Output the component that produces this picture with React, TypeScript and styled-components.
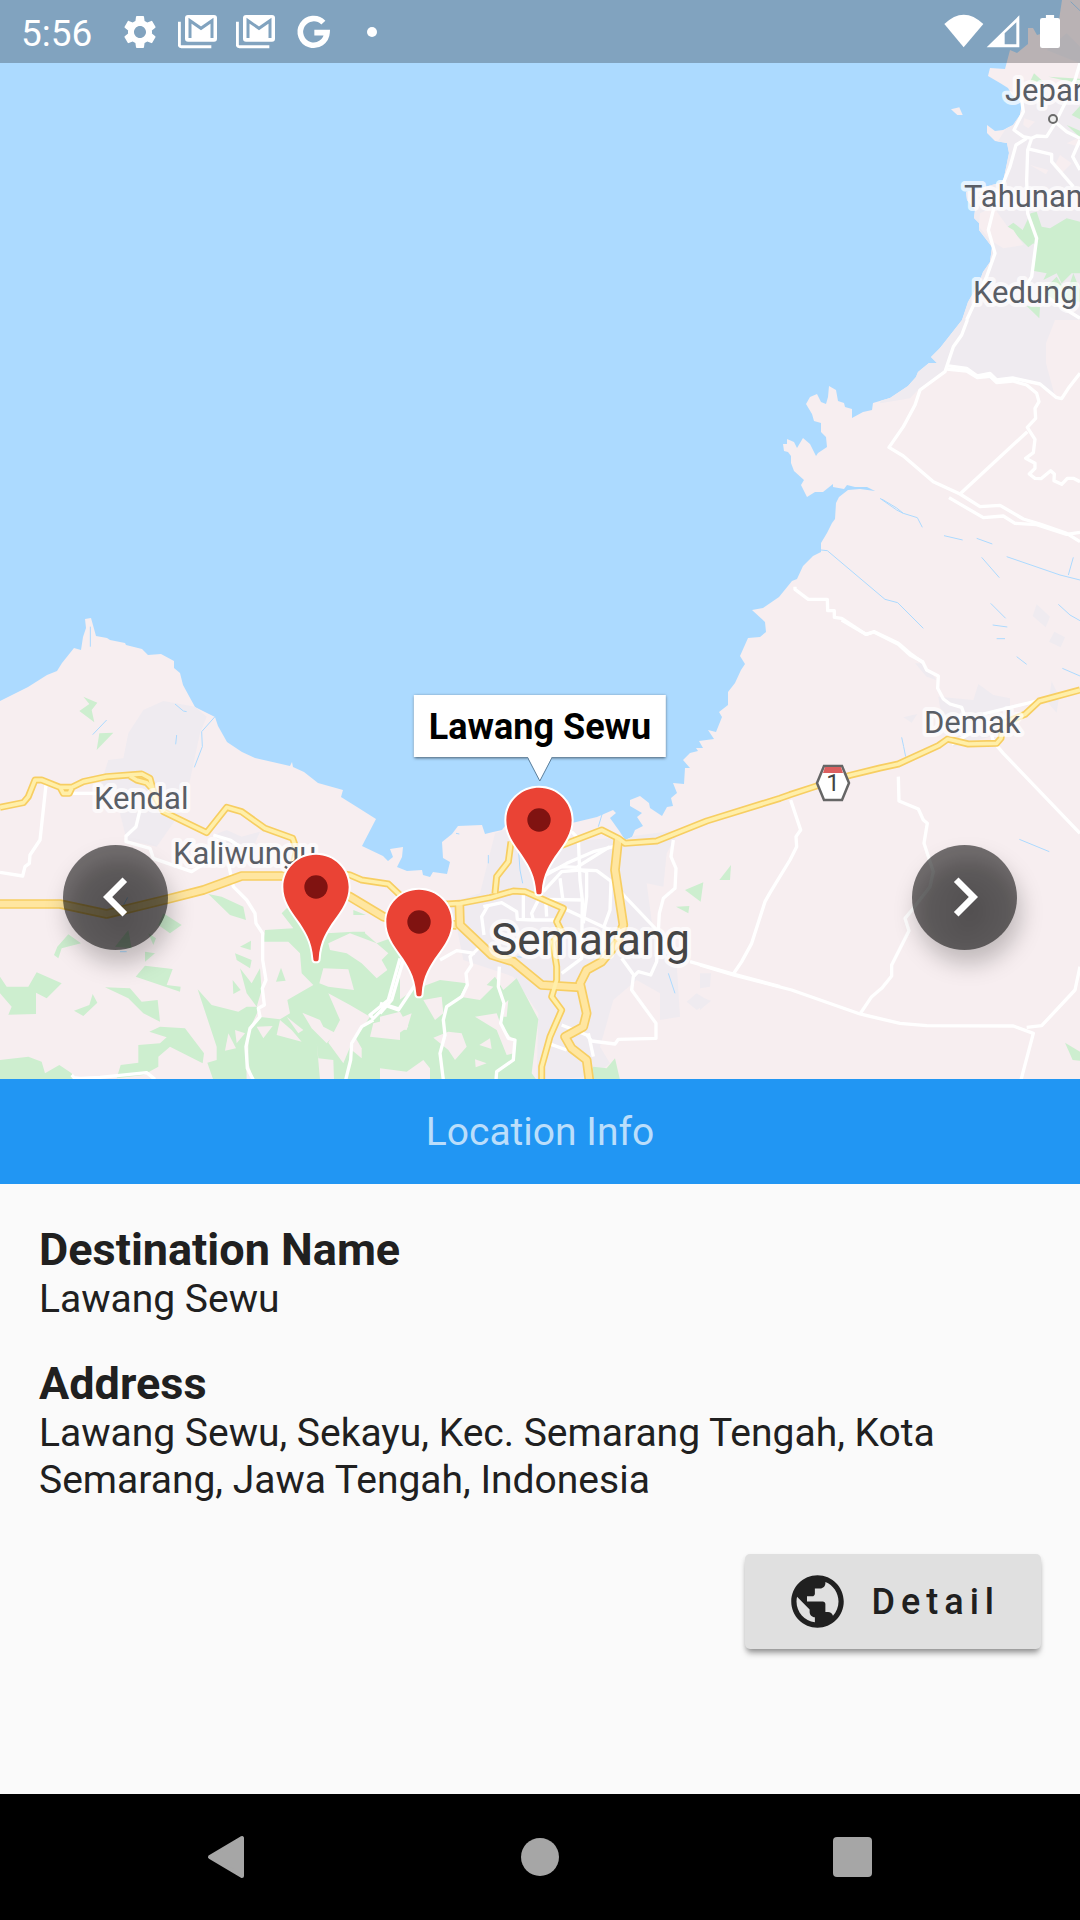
import React from "react";
import styled, { createGlobalStyle } from "styled-components";
import { MdChevronLeft, MdChevronRight, MdPublic, MdSettings } from "react-icons/md";

const GlobalStyle = createGlobalStyle`
  * { box-sizing: border-box; }
  body { margin: 0; background: #fafafa; font-family: Roboto, "Liberation Sans", sans-serif; }
  h1, h2, p, dl, dt, dd { margin: 0; }
  button { font: inherit; border: 0; padding: 0; cursor: pointer; }
`;

const Screen = styled.main`
  display: flex;
  flex-direction: column;
  min-height: 100vh;
  background: #fafafa;
  color: #202020;
`;

const MapArea = styled.section`
  position: relative;
  width: 100%;
  aspect-ratio: 1080 / 1079;
  overflow: hidden;
  background: #acdaff;
`;

const MapDrawing = styled.svg`
  display: block;
  width: 100%;
  height: 100%;
`;

const StatusBar = styled.header`
  position: absolute;
  inset: 0 0 auto 0;
  display: flex;
  align-items: center;
  justify-content: space-between;
  height: 63px;
  padding: 0 20px 0 21px;
  background: rgba(0, 0, 0, 0.25);
  color: #fff;
`;

const StatusGroup = styled.div<{ $gap: number }>`
  display: flex;
  align-items: center;
  gap: ${(p) => p.$gap}px;
  svg { display: block; }
`;

const Clock = styled.time`
  font-size: 37px;
  line-height: 44px;
  margin: 4px 10px 0 0;
`;

const Pin = styled.button<{ $x: number; $y: number }>`
  position: absolute;
  left: ${(p) => p.$x}%;
  top: ${(p) => p.$y}%;
  width: 70px;
  height: 115px;
  margin: -35px 0 0 -35px;
  background: none;
  svg { display: block; }
`;

const Callout = styled.div`
  position: absolute;
  left: 50%;
  top: 64.4%;
  transform: translateX(-50%);
  padding: 11px 15px 9px;
  background: #fff;
  color: #000;
  font-size: 36px;
  line-height: 42px;
  font-weight: 700;
  white-space: nowrap;
  box-shadow: 0 1px 3px rgba(0, 0, 0, 0.6);
`;

const CalloutTip = styled.svg`
  position: absolute;
  left: 50%;
  top: 100%;
  width: 24px;
  height: 25px;
  margin-left: -12px;
`;

const StepButton = styled.button<{ $side: "left" | "right" }>`
  position: absolute;
  ${(p) => p.$side}: 63px;
  top: 78.3%;
  display: grid;
  place-items: center;
  width: 105px;
  height: 105px;
  border-radius: 50%;
  background: rgba(0, 0, 0, 0.54);
  color: #fff;
  filter: drop-shadow(4px 14px 11px rgba(0, 0, 0, 0.4));
`;

const PanelHeader = styled.h1`
  padding: 30px 32px 28px;
  background: #2196f3;
  color: #bbdefb;
  font-size: 39px;
  line-height: 47px;
  font-weight: 400;
  text-align: center;
`;

const Panel = styled.section`
  flex: 1;
  display: flex;
  flex-direction: column;
  padding: 40px 39px;
`;

const Details = styled.dl`
  display: flex;
  flex-direction: column;
  gap: 35px;
`;

const Term = styled.dt`
  font-size: 45px;
  line-height: 52px;
  font-weight: 700;
`;

const Value = styled.dd`
  font-size: 39px;
  line-height: 47px;
`;

const DetailButton = styled.button`
  align-self: flex-end;
  display: flex;
  align-items: center;
  gap: 22px;
  height: 95px;
  margin-top: 50px;
  padding: 0 41px;
  border-radius: 5px;
  background: #e0e0e0;
  color: #202020;
  box-shadow: 0 6px 6px -2px rgba(0, 0, 0, 0.35), 0 2px 4px rgba(0, 0, 0, 0.12);
`;

const ButtonLabel = styled.span`
  font-size: 36px;
  line-height: 42px;
  font-weight: 500;
  letter-spacing: 6px;
`;

const NavBar = styled.nav`
  display: grid;
  grid-template-columns: repeat(3, 29%);
  justify-content: center;
  height: 126px;
  background: #000;
`;

const NavButton = styled.button`
  display: grid;
  place-items: center;
  background: none;
  color: #a6a6a6;
`;

const SEA = "#acdaff";
const LAND = "#f7eef0";
const URBAN = "#efebf0";
const GREEN = "#cdeecf";

const coast =
  "M0,701 28,687 47,675 57,671 62,663 74,648 81,650 83,637 86,628 85,619 91,618 96,636 107,638 110,640 125,643 126,645 142,649 148,655 161,654 174,661 174,668 180,673 183,685 195,707 215,717 218,726 227,742 242,752 255,758 290,766 292,762 293,767 304,772 318,783 343,790 341,797 357,807 376,819 362,846 383,856 388,861 393,857 390,849 403,847 402,857 397,867 407,871 422,870 423,875 430,877 433,872 447,874 450,862 443,858 442,842 452,834 458,826 482,825 485,834 493,832 502,830 505,826 572,823 597,817 613,810 616,813 610,818 620,832 625,840 632,837 635,830 643,826 637,817 642,813 630,806 630,800 640,796 649,803 650,808 662,816 667,807 673,806 671,798 677,793 673,783 684,784 685,768 690,768 683,760 690,753 698,751 696,748 703,748 699,741 714,739 708,730 716,732 722,717 719,712 728,705 728,692 735,683 741,670 745,664 740,656 748,638 760,637 766,632 765,622 752,610 763,608 779,597 792,581 797,579 803,566 813,556 821,552 821,543 827,533 832,523 835,519 836,503 839,497 848,490 860,489 875,491 867,487 855,487 847,485 844,489 833,487 833,484 823,492 815,492 807,497 801,485 804,480 794,471 791,463 791,456 788,452 784,451 783,444 787,444 787,439 794,442 797,448 803,438 810,444 816,456 818,453 827,447 826,437 821,432 821,423 814,421 812,414 806,404 810,397 817,394 821,402 826,404 828,397 829,386 836,390 838,401 844,403 845,407 852,409 852,418 863,412 872,410 873,403 890,398 908,386 916,377 918,372 929,363 937,363 931,357 940,348 962,320 968,302 975,290 980,280 983,272 990,262 992,247 979,230 979,223 974,218 975,210 967,200 966,192 1003,182 1007,163 1009,153 1007,143 995,141 987,133 987,125 995,131 1003,130 1013,125 1020,115 1022,103 1012,95 1008,88 1000,83 988,76 990,68 1005,69 1010,50 1017,53 1028,44 1028,28 1033,28 1037,35 1051,31 1059,20 1062,0 1080,0 1080,1080 0,1080Z";

interface Sheet {
  x: number;
  y: number;
  urban?: string[];
  parks?: string[];
  clearings?: string[];
  streams?: string[];
  streets?: string[];
  roads?: string[];
  highways?: string[];
}

// The map is split into sheets drawn at three times their final size.
const sheets: Sheet[] = [
  {
    x: 880, y: 0,
    urban: [
      "420,320 470,260 600,290 600,960 525,960 498,1030 498,1090 525,1190 465,1150 340,1143 270,1110 195,1110 120,1164 90,1195 0,1210 60,1020 240,600",
      "500,150 560,100 600,140 600,190",
    ],
    parks: [
      "383,680 400,668 428,690 452,640 470,635 485,680 510,685 560,655 600,665 600,820 575,820 545,850 530,820 490,840 500,820 458,812 470,740 460,730 445,742",
      "560,375 600,392 600,412", "575,345 600,318 600,358", "505,230 600,236 600,252", "450,245 462,220 490,245",
      "480,880 530,830 560,880 580,820 600,870 600,905 500,900", "440,918 480,920 478,955",
    ],
    clearings: [
      "300,640 340,620 383,680 400,690 430,735 370,745 330,720 297,680",
      "432,355 465,365 445,385 430,375", "540,465 575,490 545,520 525,495", "450,495 505,510 498,523", "560,430 598,412 598,440",
      "213,328 238,322 248,345 232,345",
    ],
    streets: [
      "600,190 585,240 555,310 525,370 500,410 470,408 455,415 430,410 402,390 430,335 425,300",
      "440,415 408,435 390,500 345,610 325,690 345,760 320,830 260,960",
      "455,415 443,450 440,540 443,640 470,715 455,830 430,870",
      "445,447 515,463 515,485 580,560", "530,370 560,395 600,415", "600,420 578,470 600,510", "500,890 560,930 600,955",
    ],
    streams: ["572,5 600,32"],
  },
  {
    x: 740, y: 320,
    urban: ["890,853 930,890 917,922 878,888", "943,935 975,952 962,982 927,965"],
    streets: [
      "682,0 665,45 640,80 615,155 540,210 525,255 490,320 447,382 490,408 580,485 660,522 720,560 780,556 850,597 900,612 980,640 1020,665",
      "620,137 680,145 712,168 750,160 770,180 818,174 900,192 948,232 965,236 985,205 1020,160",
      "620,147 680,153 712,173 750,169 770,188 818,183 860,195 890,220 897,245 885,265 887,295 862,322 885,358 880,398 857,415 885,430 885,445 868,462 885,475 903,476 932,452 943,462 942,482 965,493 982,475 1000,475 1020,485",
      "862,335 660,522",
      "627,533 730,593 790,588 825,610 890,614 980,643 1020,637",
      "165,800 165,808 205,838 262,838 263,872 283,872 283,892 305,895 378,943 403,935 475,970 510,1000 548,1027",
    ],
    streams: [
      "420,535 470,570 490,580 532,593 547,622", "425,537 470,564 490,580", "612,647 668,660", "710,655 757,672",
      "800,710 960,765 1020,780", "1000,712 985,765", "725,712 778,773", "752,850 797,895", "758,915 802,921",
      "770,956 795,956", "955,853 990,885 1020,902", "243,690 262,692 435,838 473,848 550,925",
    ],
  },
  {
    x: 0, y: 600,
    urban: [
      "385,400 430,330 490,303 585,320 620,350 600,400 570,540 540,640 470,740 380,720 360,640 400,600 300,560 325,480 370,475",
      "640,705 680,690 725,710 780,695 760,740 700,770",
    ],
    parks: [
      "250,290 292,308 275,330 283,367 238,333 268,312", "298,400 340,398 290,450",
      "0,1130 20,1160 85,1160 110,1117 185,1150 140,1195 108,1178 108,1242 25,1244 35,1220 0,1180",
      "205,1003 243,1030 185,1045 175,1075 162,1065 172,1040", "278,1182 292,1208 250,1248 222,1232 268,1215",
      "315,1162 390,1165 425,1205 473,1200 480,1265 430,1240 385,1195",
      "435,1097 518,1107 500,1155 542,1160 540,1175 407,1130", "490,940 545,975 510,1000 475,975",
      "435,1055 465,1060 435,1085", "345,1040 385,990 395,1045", "445,1000 468,1015 460,1035",
      "0,1380 85,1370 125,1385 135,1420 178,1395 215,1420 220,1440 0,1440",
      "448,1295 480,1280 555,1285 612,1360 608,1390 510,1340 475,1370 475,1400 430,1425 350,1435 362,1395 415,1388 415,1335 480,1330 500,1312",
      "625,882 665,890 730,920 738,960 690,945", "705,1060 755,1080 750,1105 710,1080", "720,1040 753,1022 752,1050",
      "720,1105 755,1150 780,1105 785,1170 770,1220 740,1180", "843,1103 857,1142 828,1145", "698,1140 722,1170 700,1182",
      "593,1168 635,1215 715,1235 740,1220 780,1220 750,1285 738,1340 740,1440 640,1440 622,1388 650,1380 650,1340",
      "860,925 900,910 905,960 980,1000 1060,995 1098,995 1098,945 1060,945 1060,930 1098,945 1098,1000 1200,1010 1200,1440 760,1440 745,1390 745,1300 775,1250 840,1258 870,1240 862,1200 940,1155 905,1120 900,1060 865,1025 790,1025 795,990 880,985 845,940",
    ],
    clearings: [
      "970,1105 1045,1108 1062,1170 985,1160 958,1150", "985,1030 1050,1000 1130,1030 1165,1060 1145,1080 1162,1110 1130,1135 1085,1090 1040,1060 990,1050",
      "1098,950 1200,960 1200,1005 1130,1030 1095,1000", "770,1280 818,1278 790,1315", "840,1260 875,1290 905,1325 830,1305",
      "860,1250 910,1290 895,1300", "907,1238 960,1260 970,1280 1008,1300 980,1330 935,1285", "985,1180 1050,1215 1110,1250 1090,1280 1055,1330 1030,1390 985,1328 1020,1260",
      "950,1325 955,1375 1000,1380 1002,1440 960,1440", "685,1300 708,1345 675,1352", "705,1290 735,1300 710,1330",
      "1065,1310 1085,1345 1085,1375 1055,1350", "1120,1270 1200,1250 1200,1320 1110,1310",
    ],
    streams: ["525,312 550,333 560,335", "645,350 605,395 607,440 583,502", "530,405 527,433", "278,404 320,360", "271,80 271,140", "383,892 368,920", "360,1055 380,1055"],
    streets: [
      "138,555 120,720 90,765 88,790 75,800 68,828 0,817", "215,580 290,580",
      "420,630 408,680 378,708 378,725 450,745 460,775 575,815 630,780", "640,705 690,720 720,740",
      "685,790 700,860 740,900 765,940 768,970 788,1000 788,1080 798,1140 787,1165 793,1215 775,1225 780,1250 750,1285 738,1340 742,1405 760,1440",
      "1200,1075 1165,1200 1110,1245 1120,1255 1160,1215 1200,1228", "1120,1260 1085,1280 1055,1330 1052,1380 1037,1440",
      "215,1425 222,1433 240,1435 300,1432 440,1418 465,1438",
    ],
    roads: [
      "390,528 410,540 440,548 460,570", "182,565 190,580 208,580 215,565",
      "0,622 70,608 85,590 105,540 125,540 180,562 215,562 250,545 320,530 425,522 450,535 465,590 490,635 620,698 680,622 725,635 795,685 878,715 890,750 880,790 960,810 1050,825 1085,840 1165,852 1210,895 1330,912 1345,912",
    ],
    highways: ["0,912 180,912 320,942 500,898 610,870 725,828 850,828 960,850 1050,890 1150,950 1200,965 1370,975"],
  },
  {
    x: 380, y: 680,
    urban: [
      "300,640 345,460 400,440 500,500 560,470 620,480 740,470 900,450 860,520 850,620 800,610 820,760 890,850 900,1010 840,1020 840,940 770,900 700,960 660,1100 690,1150 640,1190 470,1200 475,1000 400,890 250,840 230,740 205,670",
      "950,940 990,965 950,990 920,965",
    ],
    parks: [
      "0,780 15,775 45,800 0,870",
      "100,930 180,900 260,910 240,950 300,960 340,920 320,915 345,890 370,930 410,895 475,1018 455,1180 470,1200 0,1200 0,1040 80,1050 95,1000 20,1030 30,980",
      "915,630 970,607 962,665", "1053,555 1050,600 1018,600", "888,680 928,678 925,700", "620,1200 640,1160 680,1165 705,1135 720,1200",
    ],
    clearings: [
      "130,960 185,950 190,1000 165,1020", "205,1055 245,1060 260,1100 225,1140 205,1110 160,1073", "330,1075 335,1107 298,1095",
      "285,1010 350,1000 365,1040 400,1080 400,1120 380,1125 350,1050", "285,1138 320,1150 287,1162", "0,1165 80,1175 130,1140 150,1165 150,1200 0,1200",
      "0,1010 60,995 85,1040 50,1065 0,1040", "375,970 385,960 380,1010 370,1010",
    ],
    streams: ["325,525 325,550", "415,500 420,570 428,610", "667,400 655,440", "865,880 885,940", "412,830 425,832", "228,460 238,462"],
    streets: [
      "575,455 595,475 600,600 607,660 605,835 545,880", "600,570 620,575 620,650 610,730",
      "490,590 560,550 640,515 700,500", "490,635 545,575 600,570 650,572 695,605 735,650 835,755", "500,580 545,560 590,562 625,540 690,500",
      "540,595 548,655", "500,658 610,660", "430,640 430,720", "550,685 690,750", "693,605 690,690 670,745", "497,660 500,710",
      "310,680 365,668 410,695 412,718 460,720 530,720", "325,675 305,710 312,765", "480,650 455,700 460,720",
      "880,480 873,530 888,565 885,625 850,655 838,700 830,845 812,885 775,875 760,890 755,930 828,1030 828,1075 715,1078 705,1092 635,1083 620,1065 545,1035",
      "725,835 765,890", "930,845 1060,882 1200,920",
      "285,820 250,815 230,812 180,840", "300,800 270,830 275,855 258,880 262,915 245,950 200,980 190,1020 195,1065 180,1120 190,1200",
      "358,860 355,920 372,970 362,1030 385,1075 405,1080 400,1140 350,1175 348,1200", "505,1090 560,1110", "625,1060 640,1130",
      "70,840 35,960 0,1000", "0,970 55,990 115,900",
    ],
    roads: [
      "345,640 350,590 385,545 393,485",
      "205,672 240,670 330,653 400,633 435,635 550,685 530,725 545,755 518,785 530,860 530,900 515,950 545,990 510,1070 485,1160 485,1200",
      "540,498 665,450 715,475 735,490 830,483 980,423 1200,355 1230,344 1310,318 1410,286 1500,264 1555,252 1675,197 1703,177 1765,192 1850,190 1863,175 1870,130 1935,103 1978,63 2100,30",
    ],
    highways: [
      "238,670 240,735 335,825 400,845 485,915 600,922",
      "715,475 705,570 730,735 710,790 665,845 620,870 600,910 620,1000 610,1040 555,1070 575,1105 620,1140 628,1200",
    ],
  },
  {
    x: 700, y: 620,
    urban: [
      "715,230 820,240 835,192 880,225 930,235 930,260 850,290 870,350 760,380 720,260", "1055,183 1077,230 1070,278 1045,250",
      "610,292 652,282 635,308", "645,130 670,130 710,180 680,170", "0,1060 33,1060 30,1100 0,1105", "0,1130 33,1142 0,1170",
    ],
    parks: ["1095,1268 1140,1295 1140,1322 1118,1320"],
    streams: ["605,352 611,380 617,410", "958,658 1048,695", "950,110 980,133", "1087,145 1140,168"],
    streets: [
      "425,0 498,43 522,36 595,73 630,105 668,125 680,150 715,168 713,205 730,237 750,252 785,262 793,285",
      "0,1035 100,1065 275,1110 480,1182 600,1210 680,1217 940,1218 1000,1240 963,1380", "980,1222 1025,1217 1125,1110 1140,1040",
      "272,540 302,630 288,650 290,680 270,720 212,815 195,845 155,970 125,1025 100,1062",
      "595,470 597,543 655,567 670,600 682,610 672,670 700,755 690,800 640,865 615,895 627,932 575,1035 575,1068 545,1105 515,1130 480,1182",
      "875,345 880,365 910,400 1140,640", "755,372 820,335", "850,282 1010,243",
    ],
  },
];

const towns = [
  { name: "Jepara", x: 1005, y: 101 },
  { name: "Tahunan", x: 964, y: 207 },
  { name: "Kedung", x: 973, y: 303 },
  { name: "Demak", x: 924, y: 733 },
  { name: "Kendal", x: 94, y: 809 },
  { name: "Kaliwungu", x: 173, y: 864 },
  { name: "Semarang", x: 491, y: 955, city: true },
];

const pins = [
  { name: "Destination west of Semarang", x: 316, y: 887 },
  { name: "Destination south of Kaliwungu", x: 419, y: 922 },
  { name: "Lawang Sewu", x: 539, y: 820 },
];

const Lines = ({ of, color, width }: { of?: string[]; color: string; width: number }) => (
  <>
    {of?.map((points) => (
      <polyline key={points} points={points} fill="none" stroke={color} strokeWidth={width} strokeLinejoin="round" />
    ))}
  </>
);

const Areas = ({ of, color }: { of?: string[]; color: string }) => (
  <>{of?.map((points) => <polygon key={points} points={points} fill={color} />)}</>
);

const place = (s: Sheet) => `translate(${s.x} ${s.y}) scale(0.33333)`;

function CoastMap() {
  return (
    <MapDrawing viewBox="0 0 1080 1079" preserveAspectRatio="xMidYMid slice" aria-label="Map of the coast around Semarang">
      <defs>
        <clipPath id="land"><path d={coast} /></clipPath>
      </defs>
      <rect width="1080" height="1080" fill={SEA} />
      <path d={coast} fill={LAND} />
      <g clipPath="url(#land)">
        {sheets.map((s) => <g key={s.x} transform={place(s)}><Areas of={s.urban} color={URBAN} /></g>)}
        {sheets.map((s) => <g key={s.x} transform={place(s)}><Areas of={s.parks} color={GREEN} /></g>)}
      </g>
      {sheets.map((s) => (
        <g key={s.x} transform={place(s)}>
          <Areas of={s.clearings} color={LAND} />
          <Lines of={s.streams} color={SEA} width={3} />
          <Lines of={s.streets} color="#fff" width={10} />
        </g>
      ))}
      {sheets.map((s) => (
        <g key={s.x} transform={place(s)}>
          <Lines of={s.roads} color="#f7ce62" width={21} />
          <Lines of={s.highways} color="#f7ce62" width={29} />
          <Lines of={s.highways} color="#ffe6a0" width={19} />
          <Lines of={s.roads} color="#ffefa9" width={11} />
        </g>
      ))}
      <circle cx="1053" cy="119" r="4" fill="#eee" stroke="#6b6b6b" strokeWidth="2" />
      <polygon points="824,766 842,766 849,783 842,800 824,800 817,783" fill="#fff" stroke="#666" strokeWidth="2.5" />
      <polygon points="825,767 841,767 843,773 823,773" fill="#dc5f5f" />
      <text x="833" y="791" textAnchor="middle" fontFamily="Roboto, sans-serif" fontSize="24" fill="#444">1</text>
      {towns.map((t) => (
        <text
          key={t.name}
          x={t.x}
          y={t.y}
          fontFamily="Roboto, sans-serif"
          fontSize={t.city ? 44 : 31}
          fill={t.city ? "#454545" : "#5a5e66"}
          stroke="rgba(255,255,255,0.7)"
          strokeWidth="8"
          strokeLinejoin="round"
          paintOrder="stroke"
        >
          {t.name}
        </text>
      ))}
    </MapDrawing>
  );
}

const MailStackIcon = () => (
  <svg width="40" height="40" viewBox="534 36 120 120" aria-hidden="true">
    <path d="M538 65V134Q538 140 544 140H634" fill="none" stroke="#fff" strokeWidth="9" />
    <rect x="555" y="45" width="96" height="80" rx="9" fill="#fff" />
    <path d="M570 114V62L603 85L636 62V114" fill="none" stroke="#81a3bf" strokeWidth="9" />
  </svg>
);

const GoogleIcon = () => (
  <svg width="40" height="40" viewBox="882 35 120 120" aria-hidden="true">
    <path d="M970 67A40 40 0 1 0 981 97H943" fill="none" stroke="#fff" strokeWidth="17" />
  </svg>
);

const DotIcon = () => (
  <svg width="40" height="40" aria-hidden="true"><circle cx="20" cy="20" r="5" fill="#fff" /></svg>
);

const PinIcon = () => (
  <svg width="70" height="115" viewBox="-105 -105 210 345" aria-hidden="true">
    <path
      d="M0-97C54-97 98-54 98 0C98 80 14 110 8 215Q8 223 0 223Q-8 223-8 215C-14 110-98 80-98 0C-98-54-54-97 0-97Z"
      fill="#ea4335" stroke="#fff" strokeWidth="12" paintOrder="stroke"
    />
    <circle r="35" fill="#801311" />
  </svg>
);

export default function App() {
  return (
    <Screen>
      <GlobalStyle />
      <MapArea>
        <CoastMap />
        {pins.map((p) => (
          <Pin key={p.name} $x={p.x / 10.8} $y={p.y / 10.79} aria-label={p.name}>
            <PinIcon />
          </Pin>
        ))}
        <Callout>
          Lawang Sewu
          <CalloutTip viewBox="0 0 24 25" aria-hidden="true">
            <path d="M0 0H24L12 24Z" fill="#fff" />
            <path d="M0 1L12 24L24 1" fill="none" stroke="#5f7f99" strokeWidth="1" />
          </CalloutTip>
        </Callout>
        <StepButton $side="left" aria-label="Previous destination"><MdChevronLeft size={78} /></StepButton>
        <StepButton $side="right" aria-label="Next destination"><MdChevronRight size={78} /></StepButton>
        <StatusBar>
          <StatusGroup $gap={18}>
            <Clock>5:56</Clock>
            <MdSettings size={40} />
            <MailStackIcon />
            <MailStackIcon />
            <GoogleIcon />
            <DotIcon />
          </StatusGroup>
          <StatusGroup $gap={2}>
            <svg width="40" height="36" viewBox="194 40 120 108" aria-hidden="true">
              <path d="M195 70Q253 14 312 70L253 140Z" fill="#fff" />
            </svg>
            <svg width="52" height="36" viewBox="320 40 156 108" aria-hidden="true">
              <path d="M322 140L420 44V140ZM376 98V131H411V65Z" fill="#fff" fillRule="evenodd" />
            </svg>
            <svg width="20" height="36" viewBox="477 40 61 108" aria-hidden="true">
              <path d="M495 42H520V51H531Q538 51 538 58V136Q538 143 531 143H484Q477 143 477 136V58Q477 51 484 51H495Z" fill="#fff" />
            </svg>
          </StatusGroup>
        </StatusBar>
      </MapArea>
      <PanelHeader>Location Info</PanelHeader>
      <Panel>
        <Details>
          <div>
            <Term>Destination Name</Term>
            <Value>Lawang Sewu</Value>
          </div>
          <div>
            <Term>Address</Term>
            <Value>Lawang Sewu, Sekayu, Kec. Semarang Tengah, Kota Semarang, Jawa Tengah, Indonesia</Value>
          </div>
        </Details>
        <DetailButton>
          <MdPublic size={63} />
          <ButtonLabel>Detail</ButtonLabel>
        </DetailButton>
      </Panel>
      <NavBar aria-label="System">
        <NavButton aria-label="Back">
          <svg width="40" height="44"><path d="M35 3V41L3 22Z" fill="currentColor" stroke="currentColor" strokeWidth="4" strokeLinejoin="round" /></svg>
        </NavButton>
        <NavButton aria-label="Home">
          <svg width="40" height="40"><circle cx="20" cy="20" r="19" fill="currentColor" /></svg>
        </NavButton>
        <NavButton aria-label="Recent apps">
          <svg width="40" height="40"><rect width="39" height="40" rx="4" fill="currentColor" /></svg>
        </NavButton>
      </NavBar>
    </Screen>
  );
}
